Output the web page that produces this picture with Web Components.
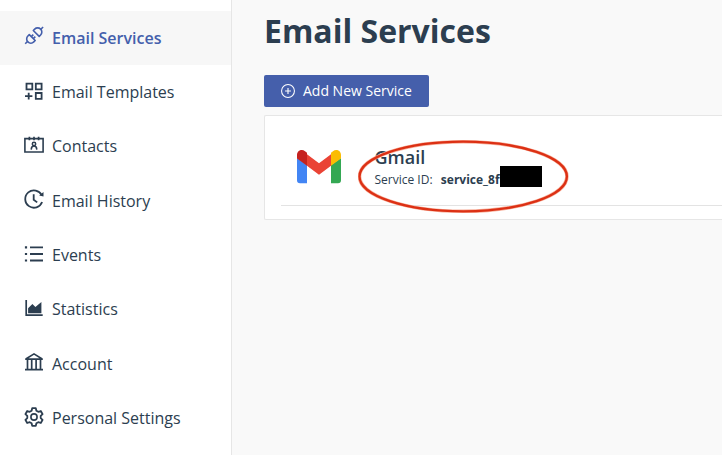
<!DOCTYPE html>
<html lang="en">
<head>
<meta charset="utf-8">
<title>Email Services</title>
<style>
html,body{margin:0;height:100%;overflow:hidden}
body{font-family:"Open Sans","Noto Sans",sans-serif;color:#2c3e50;background:#f9f9f9}
</style>
</head>
<body>
<mail-app></mail-app>
<script>
const ICONS = {
  api: '<g stroke-width="1.6" stroke-linejoin="round"><path d="M1.200 17.800l2.500-2.500M16.600 3.500l2.500-2.500M7.300 10.600l2-2M9.300 12.600l2-2"/><path d="M5.300 8.600l5.900 5.900-1.400 1.400a4.170 4.170 0 0 1-5.900-5.900z"/><path d="M9.300 4.500l5.900 5.900 1.400-1.400a4.170 4.170 0 0 0-5.900-5.900z"/></g>',
  blocks: '<path stroke-width="1.8" d="M2.500 2.600h5.800v5.800H2.500zM11.800 2.600h5.800v5.800h-5.800zM11.800 12h5.800v5.800h-5.800zM4.700 11.800v6.800M1 15.200h7.400"/>',
  contacts: '<path stroke-width="1.6" d="M.9 3.600h18.200v13.400H.9z"/><path stroke-width="1.7" d="M5.400 1.700v3.600M10 1.700v3.600M14.600 1.700v3.600"/><circle cx="10" cy="8.900" r="1.700" stroke-width="1.500"/><path stroke-width="1.500" d="M7.200 14.600c.1-2.300 1.300-3.500 2.800-3.500s2.700 1.200 2.800 3.500"/>',
  history: '<path stroke-width="1.8" d="M17.800 6.300A8.700 8.700 0 1 0 18.100 13M9.700 5.200v5.600l3.500 2.600"/><path fill="currentColor" stroke="none" d="M19.500 3.100v4.300l-4.300-.9z"/>',
  list: '<path stroke-width="1.800" d="M6 4.300h13M6 11h13M6 17.500h13"/><path stroke-width="2.200" d="M.9 4.300h2.200M.9 11h2.200M.9 17.500h2.200"/>',
  chart: '<path stroke-width="1.700" d="M2.200 2v15.200h16.500"/><path fill="currentColor" stroke="none" d="M4.100 15.200v-5l4.300-4.300 3 3L17.400 4v11.200z"/>',
  bank: '<path stroke-width="1.700" d="M1.200 7.200h17.600M1 17.600h18M3.500 7.500v10M7.700 7.500v10M12.100 7.500v10M16.500 7.500v10M2.200 6.700L10 1.900l7.800 4.800"/>',
  gear: '<g transform="translate(0 .8)"><path stroke-width="1.800" stroke-linejoin="round" d="M8.200 1.400h3.600l.6 2.500 1.900 1.100 2.500-.8 1.800 3.200-1.900 1.700v2.200l1.900 1.700-1.800 3.200-2.500-.8-1.900 1.100-.6 2.500H8.200l-.6-2.500-1.900-1.100-2.500.8L1.400 13l1.900-1.700V9.100L1.400 7.400l1.800-3.200 2.500.8 1.900-1.100z"/><circle cx="10" cy="10.200" r="3.100" stroke-width="1.600"/></g>',
  plus: '<circle cx="10" cy="10" r="9.200" stroke-width="1.500"/><path stroke-width="1.600" d="M10 5.800v8.400M5.800 10h8.400"/>'
};
function define(name, render) {
  customElements.define(name, class extends HTMLElement {
    constructor() { super(); this.attachShadow({mode: 'open'}); }
    connectedCallback() {
      const t = document.createElement('template');
      t.innerHTML = render(this);
      this.shadowRoot.replaceChildren(t.content.cloneNode(true));
    }
  });
}
define('ui-icon', el => `<style>
:host{display:block;flex:none;width:20px;height:20px}
svg{display:block;width:100%;height:100%;overflow:visible}</style>
<svg viewBox="0 0 20 20" fill="none" stroke="currentColor">${ICONS[el.getAttribute('name')]}</svg>`);
define('nav-item', el => `<style>
:host{display:flex;align-items:center;gap:8px;height:54.3px;padding-left:24px;font-size:16px;line-height:24px;white-space:nowrap;box-sizing:border-box}
:host([active]){background:#f7f7f7;color:#445fac;font-weight:600}
ui-icon{margin-bottom:3px}</style>
<ui-icon name="${el.getAttribute('icon')}"></ui-icon><span><slot></slot></span>`);
define('side-nav', () => `<style>
:host{display:block;width:231px;flex:none;background:#fff;border-right:1px solid #e6e6e6;padding-top:10.65px}</style>
<slot></slot>`);
define('add-button', () => `<style>
:host{display:flex;align-items:center;gap:8px;width:165px;height:32px;padding-left:17px;box-sizing:border-box;border-radius:2px;background:#455fab;color:#fff;font-size:14px;white-space:nowrap}
span{margin-bottom:1px}
ui-icon{width:14px;height:14px}</style>
<ui-icon name="plus"></ui-icon><span><slot></slot></span>`);
define('gmail-logo', () => `<style>:host{display:block;width:44px;height:34px}svg{display:block}</style>
<svg width="44" height="34" viewBox="0 0 44 34">
<path fill="#4285f4" d="M0 8l10 7v18.200H3a3 3 0 0 1-3-3z"/>
<path fill="#34a853" d="M34 15l10-7v22.200a3 3 0 0 1-3 3h-7z"/>
<path fill="#ea4335" d="M10 4.300l12 9 12-9v11.500L22 24.700l-12-8.900z"/>
<path fill="#c5221f" d="M0 5C0 .8 4.700-1.400 8 1.200l2 1.500v13.100L0 8.500z"/>
<path fill="#fbbc04" d="M44 5c0-4.200-4.700-6.400-8-3.800l-2 1.500v13.100l10-7.300z"/></svg>`);
define('red-ring', () => `<style>:host{display:block;width:212px;height:76px}svg{display:block}</style>
<svg width="212" height="76"><ellipse cx="105.200" cy="37.500" rx="103.700" ry="34.800" fill="none" stroke="#f8b09b" stroke-width="3.600"/><ellipse cx="105.200" cy="37.500" rx="103.700" ry="34.800" fill="none" stroke="#dc3014" stroke-width="2.300"/></svg>`);
define('service-card', () => `<style>
:host{display:block;position:relative;height:105px;box-sizing:border-box;background:#fff;border:1px solid #e6e6e6;border-right:0;border-radius:2px 0 0 2px;padding-left:16px}
.row{display:flex;height:90px;box-sizing:border-box;border-bottom:1px solid #e3e3e3;padding-left:16px}
gmail-logo{margin-top:34px;flex:none}
.info{margin:29px 0 0 33.500px;white-space:nowrap}
.title{font-size:18px;line-height:25px;font-weight:600}
.id{display:flex;gap:8.300px;font-size:12px;line-height:20px}
b{font-weight:700}
.mask{position:absolute;left:235px;top:50px;width:42.400px;height:21px;background:#000}
red-ring{position:absolute;left:93px;top:23px}</style>
<div class="row"><gmail-logo></gmail-logo><div class="info"><div class="title"><slot name="title"></slot></div><div class="id"><span>Service ID:</span><b><slot name="id"></slot></b></div></div></div>
<div class="mask"></div><red-ring></red-ring>`);
define('main-panel', () => `<style>
:host{display:flex;flex-direction:column;flex:1;min-width:0;padding:7px 0 0 32px;box-sizing:border-box}
h1{margin:0;font-size:32px;line-height:47px;font-weight:700;white-space:nowrap}
add-button{margin-top:21px}service-card{margin-top:8px}</style>
<h1>Email Services</h1><add-button>Add New Service</add-button>
<service-card><span slot="title">Gmail</span><span slot="id">service_8f</span></service-card>`);
define('mail-app', () => `<style>:host{display:flex;height:100%}</style>
<side-nav>
<nav-item icon="api" active>Email Services</nav-item>
<nav-item icon="blocks">Email Templates</nav-item>
<nav-item icon="contacts">Contacts</nav-item>
<nav-item icon="history">Email History</nav-item>
<nav-item icon="list">Events</nav-item>
<nav-item icon="chart">Statistics</nav-item>
<nav-item icon="bank">Account</nav-item>
<nav-item icon="gear">Personal Settings</nav-item>
</side-nav><main-panel></main-panel>`);
</script>
</body>
</html>
